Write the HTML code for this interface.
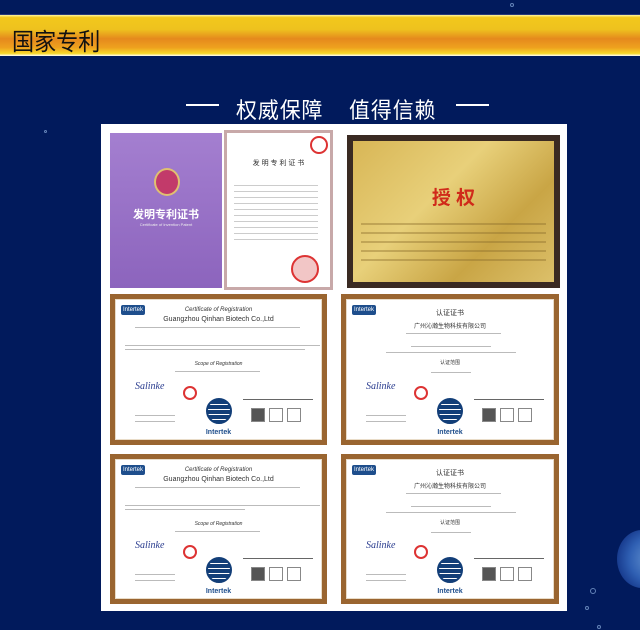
<!DOCTYPE html>
<html><head><meta charset="utf-8"><style>
*{margin:0;padding:0;box-sizing:border-box}
body{width:640px;height:630px;background:#011a5c;position:relative;overflow:hidden;font-family:"Liberation Sans","Noto Sans CJK SC",sans-serif}
.bar{position:absolute;left:0;top:14px;width:640px;height:42px;background:linear-gradient(#fff6a0 0,#f2c81c 6%,#eec21e 35%,#e5891d 58%,#eea21e 80%,#f7d92a 94%,#fff 100%);border-top:1px solid #2a3a7a}
.bar span{position:absolute;left:12px;top:7px;font-size:24px;color:#111;transform:scaleX(.92);transform-origin:left}
.sub{position:absolute;top:93px;color:#fff;font-size:22px;letter-spacing:1px;white-space:nowrap;transform:scaleX(.95);transform-origin:left}
.ln{position:absolute;top:104px;height:2px;background:#fff;width:33px}
.panel{position:absolute;left:101px;top:124px;width:466px;height:487px;background:#fff}
.a{position:absolute}
.cert{position:absolute;border:5px solid #9a6530;background:#fff;box-shadow:0 0 0 1px #e9dcc8 inset,0 0 0 2px #fff inset}
.cert .logo{position:absolute;left:6px;top:6px;width:24px;height:10px;background:#1e4e8c;border-radius:2px;color:#fff;font-size:6px;text-align:center;line-height:10px}
.t{position:absolute;left:0;width:100%;text-align:center;color:#333}
.gl{position:absolute;left:50%;margin-left:-13px;bottom:16px;width:26px;height:26px;border-radius:50%;background:repeating-linear-gradient(#123e78 0,#123e78 4px,#fff 4px,#fff 5px);border:2px solid #123e78}
.il{position:absolute;left:50%;margin-left:-16px;bottom:4px;width:32px;text-align:center;font-size:7px;color:#1e4e8c;font-weight:bold}
.lines{position:absolute;height:2px;background:#bbb}
.seal{position:absolute;border-radius:50%;border:2px solid #d33}
.bub{position:absolute;border:1px solid #8fb0e0;border-radius:50%;opacity:.7}
.sig{position:absolute;left:20px;bottom:48px;font-size:10px;font-style:italic;color:#2b3d8f;font-family:"Liberation Serif",serif}
.bx{position:absolute;bottom:18px;width:14px;height:14px;border:1px solid #888}
</style></head><body>
<div class="bar"><span>国家专利</span></div>
<div class="ln" style="left:186px"></div>
<div class="sub" style="left:236px">权威保障</div>
<div class="sub" style="left:349px">值得信赖</div>
<div class="ln" style="left:456px"></div>
<div class="bub" style="left:510px;top:3px;width:4px;height:4px"></div>
<div class="bub" style="left:44px;top:130px;width:3px;height:3px"></div>
<div class="bub" style="left:590px;top:588px;width:6px;height:6px"></div>
<div class="bub" style="left:585px;top:606px;width:4px;height:4px"></div>
<div class="bub" style="left:597px;top:625px;width:4px;height:4px"></div>
<div class="a" style="left:617px;top:530px;width:50px;height:58px;border-radius:50% 0 0 50%;background:radial-gradient(circle at 70% 50%,#7fb4f0,#3a70c8 50%,#1a3f96 80%);opacity:.8"></div>
<div class="panel"></div>
<div class="a" style="left:110px;top:133px;width:112px;height:155px;background:linear-gradient(#a47fd0,#8c64bd);"></div>
<div class="a" style="left:154px;top:168px;width:26px;height:28px;border-radius:50%;background:#c23a6a;border:2px solid #e0c070"></div>
<div class="a" style="left:110px;top:206px;width:112px;text-align:center;color:#fff;font-size:11px;font-weight:bold">发明专利证书</div>
<div class="a" style="left:110px;top:222px;width:112px;text-align:center;color:#eee;font-size:4px">Certificate of Invention Patent</div>
<div class="a" style="left:224px;top:130px;width:109px;height:160px;background:#fff;border:3px solid #c8a9a9"></div>
<div class="a" style="left:224px;top:158px;width:109px;text-align:center;font-size:7px;color:#333">发 明 专 利 证 书</div>
<div class="seal" style="left:310px;top:136px;width:18px;height:18px"></div>
<div class="seal" style="left:291px;top:255px;width:28px;height:28px;background:#f2c6c6"></div>
<div class="a" style="left:234px;top:180px;width:84px;height:60px;background:repeating-linear-gradient(#fff 0,#fff 5px,#ccc 5px,#ccc 6px)"></div>
<div class="a" style="left:347px;top:135px;width:213px;height:153px;background:#3a2a22;padding:6px">
<div style="width:100%;height:100%;background:linear-gradient(135deg,#d8b656,#e8d07a 40%,#c9a545 70%,#dcc06a);position:relative">
<div class="t" style="top:42px;color:#d02a1a;font-size:19px;font-weight:bold">授 权</div>
<div style="position:absolute;left:8px;top:75px;width:185px;height:50px;background:repeating-linear-gradient(#0000 0,#0000 7px,#8a6c2a66 7px,#8a6c2a66 9px)"></div>
</div></div>

<div class="cert" style="left:110px;top:294px;width:217px;height:151px"><div class="logo">Intertek</div>
<div class="t" style="top:8px;font-size:6px;font-style:italic">Certificate of Registration</div>
<div class="t" style="top:17px;font-size:7px">Guangzhou Qinhan Biotech Co.,Ltd</div>
<div class="lines" style="left:20px;top:28px;width:165px;height:1px"></div>
<div class="lines" style="left:10px;top:46px;width:195px;height:1px"></div><div class="lines" style="left:10px;top:50px;width:180px;height:1px"></div>
<div class="t" style="top:62px;font-size:5px;font-style:italic">Scope of Registration</div>
<div class="lines" style="left:60px;top:72px;width:85px;height:1px"></div>
<div class="sig">Salinke</div><div class="seal" style="left:68px;bottom:40px;width:14px;height:14px"></div>
<div class="lines" style="left:20px;bottom:24px;width:40px;height:1px"></div><div class="lines" style="left:20px;bottom:18px;width:40px;height:1px"></div>
<div class="lines" style="left:128px;bottom:40px;width:70px;height:1px;background:#666"></div>
<div class="bx" style="left:136px;background:#555"></div><div class="bx" style="left:154px"></div><div class="bx" style="left:172px"></div>
<div class="gl"></div><div class="il">Intertek</div></div>

<div class="cert" style="left:341px;top:294px;width:218px;height:151px"><div class="logo">Intertek</div>
<div class="t" style="top:9px;font-size:7px">认证证书</div>
<div class="t" style="top:22px;font-size:6px">广州沁瀚生物科技有限公司</div>
<div class="lines" style="left:60px;top:34px;width:95px;height:1px"></div>
<div class="lines" style="left:65px;top:47px;width:80px;height:1px"></div><div class="lines" style="left:40px;top:53px;width:130px;height:1px"></div>
<div class="t" style="top:60px;font-size:5px">认证范围</div>
<div class="lines" style="left:85px;top:73px;width:40px;height:1px"></div>
<div class="sig">Salinke</div><div class="seal" style="left:68px;bottom:40px;width:14px;height:14px"></div>
<div class="lines" style="left:20px;bottom:24px;width:40px;height:1px"></div><div class="lines" style="left:20px;bottom:18px;width:40px;height:1px"></div>
<div class="lines" style="left:128px;bottom:40px;width:70px;height:1px;background:#666"></div>
<div class="bx" style="left:136px;background:#555"></div><div class="bx" style="left:154px"></div><div class="bx" style="left:172px"></div>
<div class="gl"></div><div class="il">Intertek</div></div>

<div class="cert" style="left:110px;top:454px;width:217px;height:150px"><div class="logo">Intertek</div>
<div class="t" style="top:8px;font-size:6px;font-style:italic">Certificate of Registration</div>
<div class="t" style="top:17px;font-size:7px">Guangzhou Qinhan Biotech Co.,Ltd</div>
<div class="lines" style="left:20px;top:28px;width:165px;height:1px"></div>
<div class="lines" style="left:10px;top:46px;width:195px;height:1px"></div><div class="lines" style="left:10px;top:50px;width:120px;height:1px"></div>
<div class="t" style="top:62px;font-size:5px;font-style:italic">Scope of Registration</div>
<div class="lines" style="left:60px;top:72px;width:85px;height:1px"></div>
<div class="sig">Salinke</div><div class="seal" style="left:68px;bottom:40px;width:14px;height:14px"></div>
<div class="lines" style="left:20px;bottom:24px;width:40px;height:1px"></div><div class="lines" style="left:20px;bottom:18px;width:40px;height:1px"></div>
<div class="lines" style="left:128px;bottom:40px;width:70px;height:1px;background:#666"></div>
<div class="bx" style="left:136px;background:#555"></div><div class="bx" style="left:154px"></div><div class="bx" style="left:172px"></div>
<div class="gl"></div><div class="il">Intertek</div></div>

<div class="cert" style="left:341px;top:454px;width:218px;height:150px"><div class="logo">Intertek</div>
<div class="t" style="top:9px;font-size:7px">认证证书</div>
<div class="t" style="top:22px;font-size:6px">广州沁瀚生物科技有限公司</div>
<div class="lines" style="left:60px;top:34px;width:95px;height:1px"></div>
<div class="lines" style="left:65px;top:47px;width:80px;height:1px"></div><div class="lines" style="left:40px;top:53px;width:130px;height:1px"></div>
<div class="t" style="top:60px;font-size:5px">认证范围</div>
<div class="lines" style="left:85px;top:73px;width:40px;height:1px"></div>
<div class="sig">Salinke</div><div class="seal" style="left:68px;bottom:40px;width:14px;height:14px"></div>
<div class="lines" style="left:20px;bottom:24px;width:40px;height:1px"></div><div class="lines" style="left:20px;bottom:18px;width:40px;height:1px"></div>
<div class="lines" style="left:128px;bottom:40px;width:70px;height:1px;background:#666"></div>
<div class="bx" style="left:136px;background:#555"></div><div class="bx" style="left:154px"></div><div class="bx" style="left:172px"></div>
<div class="gl"></div><div class="il">Intertek</div></div>
</body></html>
